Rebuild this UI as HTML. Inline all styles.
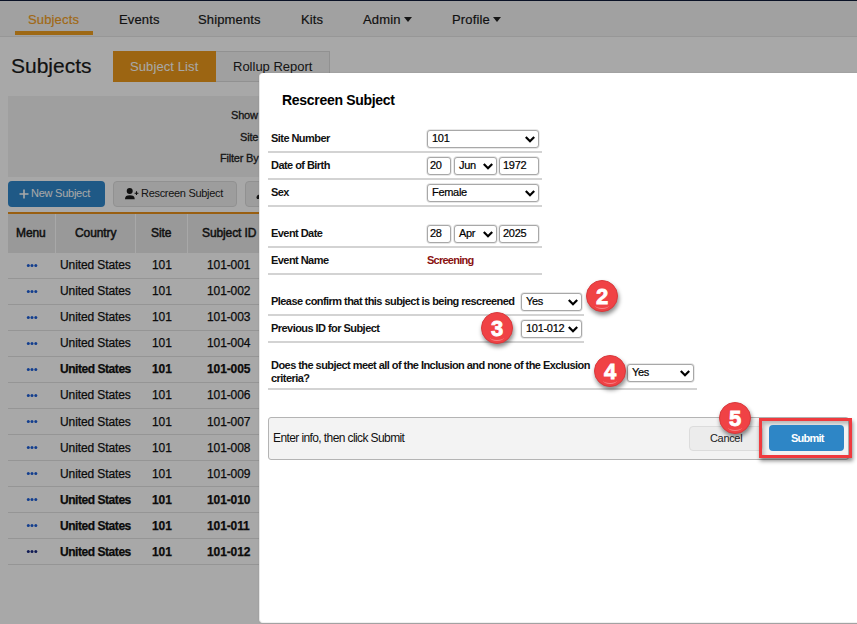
<!DOCTYPE html>
<html><head><meta charset="utf-8">
<style>
*{box-sizing:border-box;margin:0;padding:0}
html,body{width:857px;height:624px;overflow:hidden;background:#fff;font-family:"Liberation Sans",sans-serif;color:#212529}
.a{position:absolute}
.t{position:absolute;white-space:nowrap;line-height:1}
#nav{left:0;top:0;width:857px;height:37px;background:#f5f5f5;border-top:1px solid #101c3a;border-bottom:1px solid #e6e6e6}
.nv{font-size:13px;color:#1a1a1a;letter-spacing:0.15px;-webkit-text-stroke:0.2px}
.caret{display:inline-block;width:0;height:0;border-left:4px solid transparent;border-right:4px solid transparent;border-top:5px solid #222;vertical-align:2px;margin-left:3px}
#overlay{left:0;top:0;width:857px;height:624px;background:rgba(0,0,0,0.34)}
.row{left:8px;width:260px;height:26px;border-bottom:1px solid #e0e0e0}
.cell{font-size:12px;color:#111;letter-spacing:-0.1px;-webkit-text-stroke:0.25px #111}
.med{font-size:11px;color:#222;-webkit-text-stroke:0.3px #222;letter-spacing:-0.2px}
.hd{font-size:12px;color:#1a1a1a;letter-spacing:-0.1px;-webkit-text-stroke:0.5px #1a1a1a}
.dots{left:26px;font-size:12px;color:#2f5fb0;font-weight:bold;letter-spacing:-1px}
#modal{left:259px;top:72.6px;width:610px;height:550.4px;background:#fff;border-radius:4px;border-left:1px solid #e6e6e6;border-bottom:1px solid #f0f0f0;box-shadow:0 0 2px rgba(0,0,0,0.12)}
.lbl{font-size:11px;font-weight:bold;color:#111;letter-spacing:-0.55px}
.hr{height:2px;background:#d3d3d3}
.sel{border:1px solid #a8a8a8;box-shadow:0 0 0 0.7px rgba(0,0,0,0.12);border-radius:3px;background:#fff;height:18px;font-size:12px;color:#111}
.sel span{position:absolute;left:4px;top:1.5px;line-height:1;font-size:11px;letter-spacing:-0.3px;color:#000;-webkit-text-stroke:0.2px #000}
.sel svg{position:absolute;right:3px;top:5px}
.chev{position:absolute;right:4px;top:5px;width:9px;height:6px}
.badge{width:32px;height:32px;border-radius:50%;background:#f04245;box-shadow:1px 3px 4px rgba(0,0,0,0.45);border:1px solid #d9393c}
.badge:after{content:"";position:absolute;left:8px;right:8px;bottom:2px;height:6px;border-bottom:1.2px solid rgba(255,255,255,0.35);border-radius:0 0 50% 50%}
.badge span{position:absolute;left:0;width:30px;top:5px;text-align:center;color:#fff;font-weight:bold;font-size:22px;line-height:1;-webkit-text-stroke:0.8px #fff}
</style></head><body>
<!-- background page -->
<div id="nav" class="a"></div>
<div class="t nv" style="left:28px;top:13px;color:#f3a024">Subjects</div>
<div class="a" style="left:15px;top:31px;width:78px;height:4px;background:#f0a020"></div>
<div class="t nv" style="left:119px;top:13px">Events</div>
<div class="t nv" style="left:198px;top:13px">Shipments</div>
<div class="t nv" style="left:301px;top:13px">Kits</div>
<div class="t nv" style="left:363px;top:13px">Admin<span class="caret"></span></div>
<div class="t nv" style="left:452px;top:13px">Profile<span class="caret"></span></div>

<div class="t" style="left:11px;top:55px;font-size:21px;color:#1a1a1a;-webkit-text-stroke:0.2px">Subjects</div>
<div class="a" style="left:113px;top:51px;width:104px;height:31px;background:#ed9a1c"></div>
<div class="t" style="left:130px;top:60px;font-size:13px;letter-spacing:0.1px;color:#fff">Subject List</div>
<div class="a" style="left:216px;top:51px;width:114px;height:31px;background:#f3f3f3;border:1px solid #ddd;border-left:none"></div>
<div class="t" style="left:233px;top:60px;font-size:13px;color:#222">Rollup Report</div>

<div class="a" style="left:8px;top:96px;width:300px;height:81px;background:#f1f1f1"></div>
<div class="t med" style="left:231px;top:110px">Show</div>
<div class="t med" style="left:240px;top:132px">Site</div>
<div class="t med" style="left:220px;top:153px">Filter By</div>

<div class="a" style="left:8px;top:181px;width:97px;height:26px;background:#3088cc;border-radius:4px"></div>
<svg class="a" style="left:19px;top:189px" width="10" height="10"><path d="M5,0.5V9.5M0.5,5H9.5" stroke="#fff" stroke-width="1.6"/></svg>
<div class="t" style="left:31px;top:188px;font-size:11px;letter-spacing:-0.25px;color:#fff">New Subject</div>
<div class="a" style="left:113px;top:181px;width:124px;height:26px;background:#efefef;border:1px solid #dcdcdc;border-radius:4px"></div>
<svg class="a" style="left:125px;top:188px" width="16" height="12"><circle cx="4.7" cy="3.1" r="3" fill="#1a1a1a"/><path d="M0,11.2 C0,8.2 1.6,7.3 4.8,7.3 C8,7.3 9.7,8.2 9.7,11.2Z" fill="#1a1a1a"/><path d="M9.6,5.2H13.4M11.5,3.3V7.1" stroke="#1a1a1a" stroke-width="1.1"/></svg>
<div class="t" style="left:141px;top:188px;font-size:11px;letter-spacing:-0.3px;color:#222">Rescreen Subject</div>
<div class="a" style="left:245px;top:181px;width:60px;height:26px;background:#efefef;border:1px solid #dcdcdc;border-radius:4px"></div>
<svg class="a" style="left:255px;top:192px" width="6" height="8"><path d="M1.5,5.5 C1.5,3.5 3,2.5 5,2.5 L6,2.5 L6,7 L2,7Z" fill="#222"/></svg>

<div class="a" style="left:8px;top:212px;width:300px;height:2px;background:#e8901a"></div>
<div class="a" style="left:8px;top:214px;width:300px;height:39px;background:#e9e9e9"></div>
<div class="a" style="left:55px;top:214px;width:1px;height:39px;background:#fff"></div>
<div class="a" style="left:135px;top:214px;width:1px;height:39px;background:#fff"></div>
<div class="a" style="left:187px;top:214px;width:1px;height:39px;background:#fff"></div>
<div class="t hd" style="left:16px;top:227px">Menu</div>
<div class="t hd" style="left:75px;top:227px">Country</div>
<div class="t hd" style="left:151px;top:227px">Site</div>
<div class="t hd" style="left:202px;top:227px">Subject ID</div>
<div class="a" style="left:8px;top:253px;width:300px;height:26px;border-bottom:1px solid #e2e2e2"></div>
<svg class="a" style="left:26px;top:263px" width="14" height="6"><circle cx="2.3" cy="2.5" r="1.5" fill="#1d5fd8"/><circle cx="6" cy="2.5" r="1.5" fill="#1d5fd8"/><circle cx="9.8" cy="2.5" r="1.5" fill="#1d5fd8"/></svg>
<div class="t cell" style="left:60px;top:259px;">United States</div>
<div class="t cell" style="left:152px;top:259px;">101</div>
<div class="t cell" style="left:207px;top:259px;">101-001</div>
<div class="a" style="left:8px;top:279px;width:300px;height:26px;border-bottom:1px solid #e2e2e2"></div>
<svg class="a" style="left:26px;top:289px" width="14" height="6"><circle cx="2.3" cy="2.5" r="1.5" fill="#1d5fd8"/><circle cx="6" cy="2.5" r="1.5" fill="#1d5fd8"/><circle cx="9.8" cy="2.5" r="1.5" fill="#1d5fd8"/></svg>
<div class="t cell" style="left:60px;top:285px;">United States</div>
<div class="t cell" style="left:152px;top:285px;">101</div>
<div class="t cell" style="left:207px;top:285px;">101-002</div>
<div class="a" style="left:8px;top:305px;width:300px;height:26px;border-bottom:1px solid #e2e2e2"></div>
<svg class="a" style="left:26px;top:315px" width="14" height="6"><circle cx="2.3" cy="2.5" r="1.5" fill="#1d5fd8"/><circle cx="6" cy="2.5" r="1.5" fill="#1d5fd8"/><circle cx="9.8" cy="2.5" r="1.5" fill="#1d5fd8"/></svg>
<div class="t cell" style="left:60px;top:311px;">United States</div>
<div class="t cell" style="left:152px;top:311px;">101</div>
<div class="t cell" style="left:207px;top:311px;">101-003</div>
<div class="a" style="left:8px;top:331px;width:300px;height:26px;border-bottom:1px solid #e2e2e2"></div>
<svg class="a" style="left:26px;top:341px" width="14" height="6"><circle cx="2.3" cy="2.5" r="1.5" fill="#1d5fd8"/><circle cx="6" cy="2.5" r="1.5" fill="#1d5fd8"/><circle cx="9.8" cy="2.5" r="1.5" fill="#1d5fd8"/></svg>
<div class="t cell" style="left:60px;top:337px;">United States</div>
<div class="t cell" style="left:152px;top:337px;">101</div>
<div class="t cell" style="left:207px;top:337px;">101-004</div>
<div class="a" style="left:8px;top:357px;width:300px;height:26px;border-bottom:1px solid #e2e2e2"></div>
<svg class="a" style="left:26px;top:367px" width="14" height="6"><circle cx="2.3" cy="2.5" r="1.5" fill="#1d5fd8"/><circle cx="6" cy="2.5" r="1.5" fill="#1d5fd8"/><circle cx="9.8" cy="2.5" r="1.5" fill="#1d5fd8"/></svg>
<div class="t cell" style="left:60px;top:363px;font-weight:bold;letter-spacing:-0.45px;">United States</div>
<div class="t cell" style="left:152px;top:363px;font-weight:bold;">101</div>
<div class="t cell" style="left:207px;top:363px;font-weight:bold;">101-005</div>
<div class="a" style="left:8px;top:383px;width:300px;height:26px;border-bottom:1px solid #e2e2e2"></div>
<svg class="a" style="left:26px;top:393px" width="14" height="6"><circle cx="2.3" cy="2.5" r="1.5" fill="#1d5fd8"/><circle cx="6" cy="2.5" r="1.5" fill="#1d5fd8"/><circle cx="9.8" cy="2.5" r="1.5" fill="#1d5fd8"/></svg>
<div class="t cell" style="left:60px;top:389px;">United States</div>
<div class="t cell" style="left:152px;top:389px;">101</div>
<div class="t cell" style="left:207px;top:389px;">101-006</div>
<div class="a" style="left:8px;top:409px;width:300px;height:26px;border-bottom:1px solid #e2e2e2"></div>
<svg class="a" style="left:26px;top:419px" width="14" height="6"><circle cx="2.3" cy="2.5" r="1.5" fill="#1d5fd8"/><circle cx="6" cy="2.5" r="1.5" fill="#1d5fd8"/><circle cx="9.8" cy="2.5" r="1.5" fill="#1d5fd8"/></svg>
<div class="t cell" style="left:60px;top:416px;">United States</div>
<div class="t cell" style="left:152px;top:416px;">101</div>
<div class="t cell" style="left:207px;top:416px;">101-007</div>
<div class="a" style="left:8px;top:435px;width:300px;height:26px;border-bottom:1px solid #e2e2e2"></div>
<svg class="a" style="left:26px;top:445px" width="14" height="6"><circle cx="2.3" cy="2.5" r="1.5" fill="#1d5fd8"/><circle cx="6" cy="2.5" r="1.5" fill="#1d5fd8"/><circle cx="9.8" cy="2.5" r="1.5" fill="#1d5fd8"/></svg>
<div class="t cell" style="left:60px;top:442px;">United States</div>
<div class="t cell" style="left:152px;top:442px;">101</div>
<div class="t cell" style="left:207px;top:442px;">101-008</div>
<div class="a" style="left:8px;top:461px;width:300px;height:26px;border-bottom:1px solid #e2e2e2"></div>
<svg class="a" style="left:26px;top:471px" width="14" height="6"><circle cx="2.3" cy="2.5" r="1.5" fill="#1d5fd8"/><circle cx="6" cy="2.5" r="1.5" fill="#1d5fd8"/><circle cx="9.8" cy="2.5" r="1.5" fill="#1d5fd8"/></svg>
<div class="t cell" style="left:60px;top:468px;">United States</div>
<div class="t cell" style="left:152px;top:468px;">101</div>
<div class="t cell" style="left:207px;top:468px;">101-009</div>
<div class="a" style="left:8px;top:487px;width:300px;height:26px;border-bottom:1px solid #e2e2e2"></div>
<svg class="a" style="left:26px;top:497px" width="14" height="6"><circle cx="2.3" cy="2.5" r="1.5" fill="#1d5fd8"/><circle cx="6" cy="2.5" r="1.5" fill="#1d5fd8"/><circle cx="9.8" cy="2.5" r="1.5" fill="#1d5fd8"/></svg>
<div class="t cell" style="left:60px;top:494px;font-weight:bold;letter-spacing:-0.45px;">United States</div>
<div class="t cell" style="left:152px;top:494px;font-weight:bold;">101</div>
<div class="t cell" style="left:207px;top:494px;font-weight:bold;">101-010</div>
<div class="a" style="left:8px;top:513px;width:300px;height:26px;border-bottom:1px solid #e2e2e2"></div>
<svg class="a" style="left:26px;top:523px" width="14" height="6"><circle cx="2.3" cy="2.5" r="1.5" fill="#1d5fd8"/><circle cx="6" cy="2.5" r="1.5" fill="#1d5fd8"/><circle cx="9.8" cy="2.5" r="1.5" fill="#1d5fd8"/></svg>
<div class="t cell" style="left:60px;top:520px;font-weight:bold;letter-spacing:-0.45px;">United States</div>
<div class="t cell" style="left:152px;top:520px;font-weight:bold;">101</div>
<div class="t cell" style="left:207px;top:520px;font-weight:bold;">101-011</div>
<div class="a" style="left:8px;top:539px;width:300px;height:26px;border-bottom:1px solid #e2e2e2"></div>
<svg class="a" style="left:26px;top:549px" width="14" height="6"><circle cx="2.3" cy="2.5" r="1.5" fill="#1a2a80"/><circle cx="6" cy="2.5" r="1.5" fill="#1a2a80"/><circle cx="9.8" cy="2.5" r="1.5" fill="#1a2a80"/></svg>
<div class="t cell" style="left:60px;top:546px;font-weight:bold;letter-spacing:-0.45px;">United States</div>
<div class="t cell" style="left:152px;top:546px;font-weight:bold;">101</div>
<div class="t cell" style="left:207px;top:546px;font-weight:bold;">101-012</div>

<div id="overlay" class="a"></div>

<!-- modal -->
<div id="modal" class="a"></div>
<div class="t" style="left:282px;top:93px;font-size:14px;font-weight:bold;color:#000;letter-spacing:-0.3px">Rescreen Subject</div>

<div class="t lbl" style="left:271px;top:133px">Site Number</div>
<div class="a sel" style="left:427px;top:130px;width:112px"><span>101</span><svg width="10" height="7"><path d="M0.8,1 L5,5.3 L9.2,1" fill="none" stroke="#000" stroke-width="2.2"/></svg></div>
<div class="a hr" style="left:268px;top:151px;width:274px"></div>
<div class="t lbl" style="left:271px;top:160px">Date of Birth</div>
<div class="a sel" style="left:427px;top:157px;width:24px"><span style="left:2px">20</span></div>
<div class="a sel" style="left:454px;top:157px;width:43px"><span>Jun</span><svg width="10" height="7"><path d="M0.8,1 L5,5.3 L9.2,1" fill="none" stroke="#000" stroke-width="2.2"/></svg></div>
<div class="a sel" style="left:499px;top:157px;width:40px"><span style="left:3px">1972</span></div>
<div class="a hr" style="left:268px;top:178px;width:274px"></div>
<div class="t lbl" style="left:271px;top:187px">Sex</div>
<div class="a sel" style="left:427px;top:184px;width:112px"><span>Female</span><svg width="10" height="7"><path d="M0.8,1 L5,5.3 L9.2,1" fill="none" stroke="#000" stroke-width="2.2"/></svg></div>
<div class="a hr" style="left:268px;top:205px;width:274px"></div>

<div class="t lbl" style="left:271px;top:228px">Event Date</div>
<div class="a sel" style="left:427px;top:225px;width:24px"><span style="left:2px">28</span></div>
<div class="a sel" style="left:454px;top:225px;width:43px"><span>Apr</span><svg width="10" height="7"><path d="M0.8,1 L5,5.3 L9.2,1" fill="none" stroke="#000" stroke-width="2.2"/></svg></div>
<div class="a sel" style="left:499px;top:225px;width:40px"><span style="left:3px">2025</span></div>
<div class="a hr" style="left:268px;top:246px;width:274px"></div>
<div class="t lbl" style="left:271px;top:255px">Event Name</div>
<div class="t" style="left:427px;top:255px;font-size:11px;font-weight:bold;color:#8a1212;letter-spacing:-0.75px">Screening</div>
<div class="a hr" style="left:268px;top:273px;width:274px"></div>

<div class="t lbl" style="left:271px;top:296px">Please confirm that this subject is being rescreened</div>
<div class="a sel" style="left:521px;top:293px;width:61px"><span>Yes</span><svg width="10" height="7"><path d="M0.8,1 L5,5.3 L9.2,1" fill="none" stroke="#000" stroke-width="2.2"/></svg></div>
<div class="a hr" style="left:268px;top:314px;width:316px"></div>
<div class="t lbl" style="left:271px;top:323px">Previous ID for Subject</div>
<div class="a sel" style="left:521px;top:320px;width:61px"><span>101-012</span><svg width="10" height="7"><path d="M0.8,1 L5,5.3 L9.2,1" fill="none" stroke="#000" stroke-width="2.2"/></svg></div>
<div class="a hr" style="left:268px;top:341px;width:316px"></div>

<div class="t lbl" style="left:271px;top:360px">Does the subject meet all of the Inclusion and none of the Exclusion</div>
<div class="t lbl" style="left:271px;top:373px">criteria?</div>
<div class="a sel" style="left:627px;top:364px;width:67px"><span>Yes</span><svg width="10" height="7"><path d="M0.8,1 L5,5.3 L9.2,1" fill="none" stroke="#000" stroke-width="2.2"/></svg></div>
<div class="a hr" style="left:268px;top:388px;width:429px"></div>

<div class="a" style="left:268px;top:417px;width:581px;height:43px;background:#f3f3f3;border:1px solid #b4b4b4;border-radius:3px"></div>
<div class="t" style="left:273px;top:432px;font-size:12px;letter-spacing:-0.6px;color:#111">Enter info, then click Submit</div>
<div class="a" style="left:689px;top:426px;width:74px;height:25px;background:#ececec;border:1px solid #dcdcdc;border-radius:4px"></div>
<div class="t" style="left:710px;top:433px;font-size:11px;letter-spacing:-0.33px;color:#222">Cancel</div>
<div class="a" style="left:759px;top:418px;width:93px;height:40px;border:3px solid #ef3a3e;box-shadow:1px 3px 4px rgba(0,0,0,0.45), inset 2px 3px 4px rgba(0,0,0,0.25)"></div>
<div class="a" style="left:769px;top:425px;width:75px;height:26px;background:#2e86c6;border-radius:4px"></div>
<div class="t" style="left:791px;top:433px;font-size:11px;letter-spacing:-0.75px;font-weight:bold;color:#fff">Submit</div>

<div class="a badge" style="left:586px;top:280px"><span>2</span></div>
<div class="a badge" style="left:481px;top:312px"><span>3</span></div>
<div class="a badge" style="left:594px;top:355px"><span>4</span></div>
<div class="a badge" style="left:719px;top:402px"><span>5</span></div>
</body></html>
